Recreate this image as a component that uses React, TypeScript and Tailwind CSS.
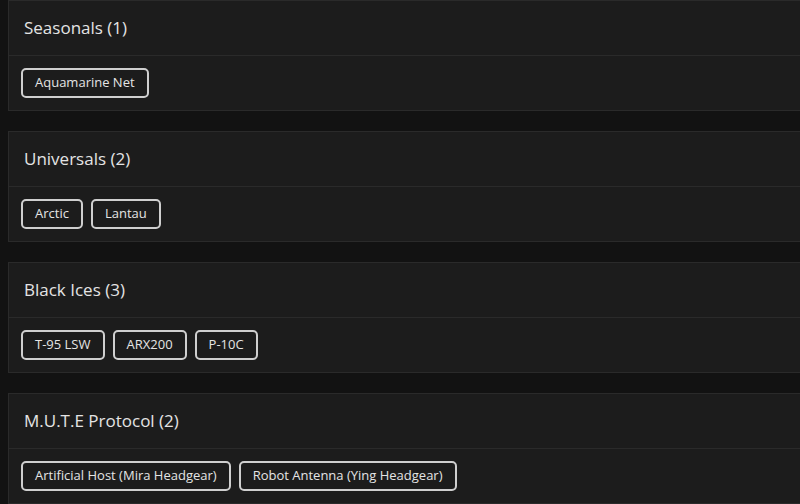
const groups = [
  { title: 'Seasonals (1)', items: ['Aquamarine Net'] },
  { title: 'Universals (2)', items: ['Arctic', 'Lantau'] },
  { title: 'Black Ices (3)', items: ['T-95 LSW', 'ARX200', 'P-10C'] },
  { title: 'M.U.T.E Protocol (2)', items: ['Artificial Host (Mira Headgear)', 'Robot Antenna (Ying Headgear)'] },
];

export default function App() {
  return (
    <div
      className="h-[504px] w-[800px] overflow-hidden bg-[#121212] pl-2 flex flex-col gap-5"
      style={{ fontFamily: '"Open Sans", "Liberation Sans", sans-serif' }}
    >
      {groups.map((g) => (
        <section key={g.title} className="w-[820px] shrink-0 border border-[#2a2a2a] bg-[#1c1c1c]">
          <div className="h-[55px] flex items-center pl-[15px] border-b border-[#2a2a2a]">
            <h2 className="text-[17px] font-medium text-[#e4e4e4]">{g.title}</h2>
          </div>
          <div className="h-[54px] flex items-center gap-2 pl-3">
            {g.items.map((item) => (
              <span
                key={item}
                className="h-[30px] flex items-center px-[12px] rounded-[5px] border-2 border-[#cfcfcf] text-[13px] text-[#e4e4e4]"
              >
                {item}
              </span>
            ))}
          </div>
        </section>
      ))}
    </div>
  );
}
